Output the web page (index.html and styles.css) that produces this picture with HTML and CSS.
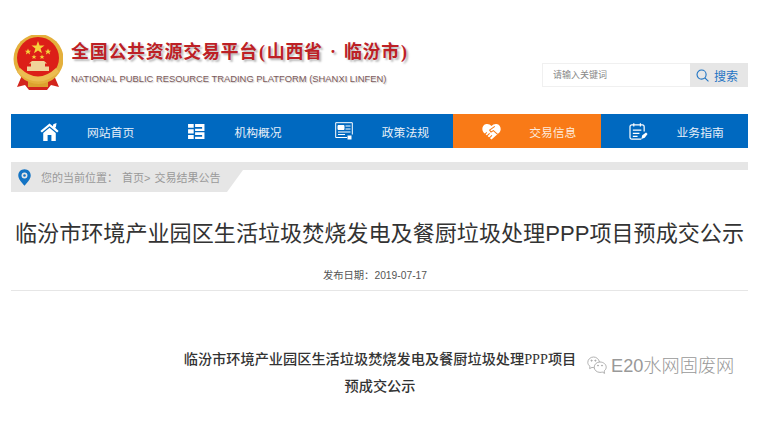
FILE: index.html
```html
<!DOCTYPE html>
<html lang="zh-CN">
<head>
    <meta charset="UTF-8">
    <title>临汾市环境产业园区生活垃圾焚烧发电及餐厨垃圾处理PPP项目预成交公示</title>
    <link rel="stylesheet" href="styles.css">
</head>
<body>
    <div class="page">
        <header class="top">
            <div class="brand">
                <svg class="emblem" viewBox="0 0 50 56" width="50" height="56">
                    <path d="M10 38 L4 52 L12 50 L16 55 H34 L38 50 L46 52 L40 38 Z" fill="#d3241c"/>
                    <path d="M15 46 H35 V52 H15 Z" fill="#dca12e"/>
                    <circle cx="25.5" cy="24" r="25" fill="#e4b03c"/>
                    <circle cx="25" cy="23" r="21" fill="#dc1f18"/>
                    <path d="M25 6 L26.6 10.6 L31.5 10.6 L27.6 13.6 L29 18.2 L25 15.4 L21 18.2 L22.4 13.6 L18.5 10.6 L23.4 10.6 Z" fill="#f6d23c"/>
                    <path d="M15 13.5 l.9 2.2 2.3 0 -1.8 1.4 .7 2.3 -2.1 -1.4 -2.1 1.4 .7 -2.3 -1.8 -1.4 2.3 0 Z" fill="#f6d23c"/>
                    <path d="M35 13.5 l.9 2.2 2.3 0 -1.8 1.4 .7 2.3 -2.1 -1.4 -2.1 1.4 .7 -2.3 -1.8 -1.4 2.3 0 Z" fill="#f6d23c"/>
                    <path d="M21 19.5 l.7 1.7 1.8 0 -1.4 1.1 .5 1.8 -1.6 -1.1 -1.6 1.1 .5 -1.8 -1.4 -1.1 1.8 0 Z" fill="#f6d23c"/>
                    <path d="M29 19.5 l.7 1.7 1.8 0 -1.4 1.1 .5 1.8 -1.6 -1.1 -1.6 1.1 .5 -1.8 -1.4 -1.1 1.8 0 Z" fill="#f6d23c"/>
                    <path d="M19 26 H31 L34 28.5 H32 V31.5 H36 V36 H14 V31.5 H18 V28.5 H16 Z" fill="#f0d49a"/>
                    <path d="M7 33 Q25 50 43 33 L46 37 Q25 56 4 37 Z" fill="#ecbd52"/>
                    <path d="M19 36 H31 V39 H19 Z" fill="#dc1f18"/>
                </svg>
                <div class="brand-text">
                    <div class="brand-cn">全国公共资源交易平台<span class="brand-paren">(</span>山西省 · 临汾市<span class="brand-paren">)</span></div>
                    <div class="brand-en">NATIONAL PUBLIC RESOURCE TRADING PLATFORM (SHANXI LINFEN)</div>
                </div>
            </div>
            <div class="search">
                <span class="search-input">请输入关键词</span>
                <span class="search-btn">
                    <svg viewBox="0 0 14 14" width="13" height="13" fill="none" stroke="#1f74c4" stroke-width="1.2">
                        <circle cx="6" cy="6" r="4.9"/>
                        <path d="M9.6 9.6 L13.4 13.4"/>
                    </svg>
                    搜索
                </span>
            </div>
        </header>

        <nav class="nav">
            <a class="nav-item">
                <span class="nav-icon">
                    <svg viewBox="0 0 20 20" width="19" height="19" fill="#fff">
                        <path d="M10 1.5 L13.6 4.4 L14 2.4 L17.4 1 L16.8 5 L16 6 L19.6 9.6 L18 11 L10 4.6 L2 11 L.4 9.6 Z"/>
                        <path d="M3.4 11.6 L10 6 L16.6 11.6 V20 H12 V13.6 H8 V20 H3.4 Z"/>
                    </svg>
                </span>
                网站首页
            </a>
            <a class="nav-item">
                <span class="nav-icon">
                    <svg viewBox="0 0 18 16" width="17" height="15" fill="#fff">
                        <path d="M0 0 H6 V4 H0 Z M0 5.7 H6 V10 H0 Z M0 11.7 H6 V16 H0 Z"/>
                        <path d="M7.5 0 H17.5 V7.4 H7.5 V5 H15 V3.2 H7.5 Z M7.5 8.8 H17.5 V16 H7.5 V13.6 H15 V11.6 H7.5 Z"/>
                    </svg>
                </span>
                机构概况
            </a>
            <a class="nav-item">
                <span class="nav-icon">
                    <svg viewBox="0 0 18 18" width="18" height="18" fill="none" stroke="#fff">
                        <path d="M12 15.5 H.7 V.7 H17.3 V12.5"/>
                        <path d="M3 3.5 H9 V7.5 H3 Z" fill="#fff"/>
                        <path d="M10.5 4 H15.5 M10.5 7 H15.5 M3 10 H15.5 M3 12.5 H10"/>
                        <path d="M12.5 13.5 H16.5 V17.5 H12.5 Z" fill="#fff" stroke="none"/>
                    </svg>
                </span>
                政策法规
            </a>
            <a class="nav-item nav-active">
                <span class="nav-icon">
                    <svg viewBox="0 0 20 18" width="19" height="17">
                        <path d="M10 17.5 L1.6 10 C-1 7 .4 1.6 4.6 1 C6.8 .7 8.6 1.6 10 3.2 C11.4 1.6 13.2 .7 15.4 1 C19.6 1.6 21 7 18.4 10 Z" fill="#fff"/>
                        <path d="M13.5 3.5 L8 7.5 L9.5 9.5 L12 8 L16.5 12 M3 12 L5 10 M5 14 L8 11 M7.5 16 L10.5 13" fill="none" stroke="#f97a17" stroke-width="1.1"/>
                    </svg>
                </span>
                交易信息
            </a>
            <a class="nav-item">
                <span class="nav-icon">
                    <svg viewBox="0 0 20 18" width="19" height="17" fill="none" stroke="#fff" stroke-width="1.3">
                        <path d="M13 17 H3 Q1 17 1 15 V4 Q1 2 3 2 H14 Q16 2 16 4 V9"/>
                        <path d="M5 .2 V3.6 M12 .2 V3.6 M4 7.5 H13 M4 11 H11 M4 14.2 H9"/>
                        <path d="M13 17 L14 13 L18 10 L19.6 11.6 L16.6 15.6 Z" fill="#fff" stroke="none"/>
                    </svg>
                </span>
                业务指南
            </a>
        </nav>

        <div class="crumb">
            <div class="crumb-tab">
                <svg class="pin" viewBox="0 0 14 18" width="13" height="17">
                    <path d="M7 0 C3 0 .3 3 .3 6.8 C.3 11 4.5 14.6 7 18 C9.5 14.6 13.7 11 13.7 6.8 C13.7 3 11 0 7 0 Z" fill="#1474c4"/>
                    <circle cx="7" cy="6.8" r="3.2" fill="#e6e6e6"/>
                    <circle cx="7" cy="6.8" r="1.4" fill="#1474c4"/>
                </svg>
                <span>您的当前位置：</span>
                <span>首页&gt;</span>
                <span>交易结果公告</span>
            </div>
        </div>

        <h1 class="title">临汾市环境产业园区生活垃圾焚烧发电及餐厨垃圾处理PPP项目预成交公示</h1>
        <div class="meta">发布日期：2019-07-17</div>

        <div class="article">
            <p>临汾市环境产业园区生活垃圾焚烧发电及餐厨垃圾处理PPP项目</p>
            <p>预成交公示</p>
        </div>
    </div>

    <div class="watermark">
        <svg viewBox="0 0 20 20" width="20" height="20" fill="none" stroke="#a8a8a8" stroke-width=".9">
            <path d="M12.5 6 C11.8 3 9.4 1 6.6 1 C3.4 1 .8 3.4 .8 6.3 C.8 8 1.7 9.5 3 10.4 L2.6 12.6 L5 11.4 C5.8 11.6 6.4 11.7 7.2 11.6"/>
            <path d="M13 6 C9.8 6 7.2 8.3 7.2 11.2 C7.2 14.1 9.8 16.4 13 16.4 C13.8 16.4 14.6 16.3 15.2 16 L17.6 17.4 L17.1 15 C18.4 14 19.2 12.7 19.2 11.2 C19.2 8.3 16.4 6 13 6 Z"/>
            <circle cx="4.6" cy="4.6" r=".6" fill="#a8a8a8"/>
            <circle cx="8.4" cy="4.6" r=".6" fill="#a8a8a8"/>
            <circle cx="11" cy="9.6" r=".5" fill="#a8a8a8"/>
            <circle cx="15" cy="9.6" r=".5" fill="#a8a8a8"/>
        </svg>
        E20水网固废网
    </div>
</body>
</html>
```

FILE: styles.css
```css
html, body {
    margin: 0;
    padding: 0;
    background: #fff;
    overflow: hidden;
}
body {
    font-family: "Liberation Sans", "Noto Sans CJK SC", sans-serif;
    color: #333;
    height: 426px;
    position: relative;
}
.page {
    width: 737px;
    margin-left: 11px;
}

/* header */
.top {
    height: 114px;
    display: flex;
    justify-content: space-between;
    align-items: flex-start;
}
.brand {
    display: flex;
    padding: 35px 0 0 2px;
}
.emblem {
    flex: none;
}
.brand-text {
    margin-left: 8px;
    padding-top: 5px;
}
.brand-cn {
    font-family: "Liberation Serif", "Noto Sans CJK SC", serif;
    font-size: 18px;
    font-weight: bold;
    letter-spacing: 0.7px;
    word-spacing: 2px;
    line-height: 24px;
    color: #bd2025;
    white-space: nowrap;
    text-shadow: 2px 2px 2px #bbb;
}
.brand-paren {
    padding: 0 1px;
}
.brand-en {
    font-size: 9.4px;
    line-height: 12px;
    margin-top: 9px;
    color: #7d5a5a;
    white-space: nowrap;
    text-shadow: 1px 1px 1px #ccc;
}
.search {
    display: flex;
    margin-top: 63px;
    height: 24px;
}
.search-input {
    width: 137px;
    padding-left: 10px;
    line-height: 22px;
    font-size: 9px;
    color: #888;
    border: 1px solid #f0f0f0;
    border-right: none;
}
.search-btn {
    width: 54px;
    padding-right: 4px;
    background: #e6e6e6;
    color: #1f74c4;
    font-size: 12px;
    display: flex;
    align-items: center;
    justify-content: center;
    gap: 5px;
}

/* nav */
.nav {
    display: grid;
    grid-template-columns: 147.4px 147.4px 147.4px 147.4px 147.4px;
    height: 34px;
    background: #0069c0;
}
.nav-item {
    display: flex;
    align-items: center;
    padding-left: 28px;
    font-size: 11.8px;
    color: #e8f0f8;
}
.nav-icon {
    width: 20px;
    margin-right: 28px;
    display: flex;
    justify-content: center;
}
.nav-active {
    background: #f97a17;
    color: #fdeadb;
}

/* breadcrumb */
.crumb {
    margin-top: 14px;
    height: 30px;
    background: linear-gradient(#e6e6e6 8px, transparent 8px);
}
.crumb-tab {
    width: 232px;
    height: 30px;
    box-sizing: border-box;
    padding: 0 0 0 7px;
    display: flex;
    align-items: center;
    gap: 4px;
    background: #e6e6e6;
    font-size: 11px;
    color: #999;
    clip-path: polygon(0 0, 100% 0, 100% 8px, 216px 100%, 0 100%);
}
.pin {
    margin-right: 6px;
}

/* title */
.title {
    margin: 27px 0 0;
    font-size: 22.1px;
    font-weight: normal;
    line-height: 30px;
    text-align: center;
    color: #333;
    white-space: nowrap;
}
.meta {
    margin-top: 19px;
    padding: 0 9px 6px 0;
    line-height: 16px;
    text-align: center;
    font-size: 10.3px;
    color: #555;
    border-bottom: 1px solid #e6e6e6;
}

/* article */
.article {
    width: 400px;
    margin: 55px 0 0 169px;
    text-align: center;
    font-family: "Liberation Serif", "Noto Sans CJK SC", serif;
    font-size: 14.2px;
    font-weight: 500;
    line-height: 27px;
    color: #333;
}
.article p {
    margin: 0;
    white-space: nowrap;
}

.watermark {
    position: absolute;
    left: 587px;
    top: 355px;
    display: flex;
    align-items: center;
    gap: 4px;
    font-size: 18.2px;
    font-weight: 300;
    line-height: 22px;
    color: #999;
    text-shadow: 0 0 2px #fff;
}
```
